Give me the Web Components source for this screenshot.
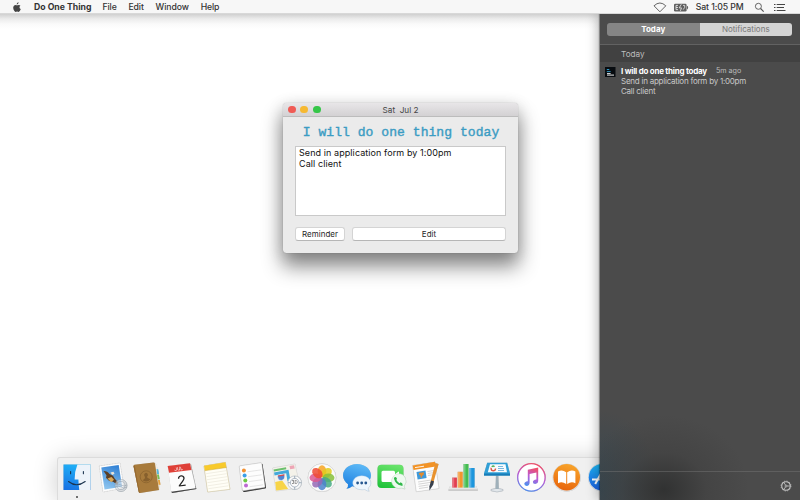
<!DOCTYPE html>
<html lang="en">
<head>
    <meta charset="UTF-8" />
    <meta name="viewport" content="width=device-width, initial-scale=1.0" />
    <title>Do One Thing</title>
    <style>
        body {
            margin: 0;
            width: 800px;
            height: 500px;
            overflow: hidden;
            background: #fff;
            font-family: Inter, "Liberation Sans", sans-serif;
            font-size: 9px;
        }
    </style>
</head>

<body>
<desk-top>
    <menu-bar slot="menu">
        <span>File</span><span>Edit</span><span>Window</span><span>Help</span>
    </menu-bar>
    <app-window slot="window" heading="Sat&nbsp; Jul 2">
        <todo-note>Send in application form by 1:00pm<br>Call client</todo-note>
    </app-window>
    <app-dock slot="dock"></app-dock>
    <notification-center slot="panel">
        <notice-item heading="I will do one thing today" when="5m ago">Send in application form by 1:00pm<br>Call client</notice-item>
    </notification-center>
</desk-top>
<script>
    function define(tag, html) {
        customElements.define(tag, class extends HTMLElement {
            constructor() {
                super();
                const t = document.createElement('template');
                t.innerHTML = typeof html === 'function' ? html(this) : html;
                this.attachShadow({ mode: 'open' }).appendChild(t.content.cloneNode(true));
            }
        });
    }

    define('desk-top', `
        <style>
            :host { display: grid; grid-template: 14px 486px / 600px 200px; width: 800px; height: 500px; }
            .menu { grid-column: 1 / 3; z-index: 3; }
            .space {
                position: relative;
                display: flex;
                flex-direction: column;
                justify-content: flex-end;
                min-width: 0;
                overflow: hidden;
                background: linear-gradient(#d0d0d0, #ececec 5px, #fafafa 10px, #fff 15px);
            }
            .window { position: absolute; left: 283px; top: 89px; }
            .panel { z-index: 2; }
        </style>
        <div class="menu"><slot name="menu"></slot></div>
        <div class="space">
            <div class="window"><slot name="window"></slot></div>
            <slot name="dock"></slot>
        </div>
        <div class="panel"><slot name="panel"></slot></div>
    `);

    define('menu-bar', `
        <style>
            :host {
                display: flex;
                align-items: center;
                box-sizing: border-box;
                height: 14px;
                padding: 1px 14px 0 12px;
                background: #f7f7f7;
                border-bottom: 1px solid #d8d8d8;
                color: #333;
                font-size: 8.7px;
                font-weight: 500;
                line-height: 12px;
                letter-spacing: -.1px;
                white-space: nowrap;
            }
            b { margin: 0 11px 0 12px; letter-spacing: 0; }
            nav { display: flex; gap: 11.8px; }
            .status { display: flex; align-items: center; margin-left: auto; }
            svg { display: block; }
        </style>
        <svg width="10" height="11" viewBox="0 0 10 11"><path fill="#444" d="M6.6.3C6.7 1.5 5.7 2.5 4.7 2.5 4.6 1.4 5.6.5 6.6.3ZM8.4 3.5C7 4.5 7.3 6.4 8.8 7.1 8.3 8.6 7.4 9.9 6.6 9.9 6 9.9 5.8 9.5 5.1 9.5 4.4 9.5 4.1 9.9 3.6 9.9 2.7 9.9 1.2 7.8 1.2 5.8 1.2 3.9 2.4 2.9 3.5 2.9 4.3 2.9 4.7 3.3 5.1 3.3 5.6 3.3 6 2.9 6.8 2.9 7.4 2.9 8.1 3.1 8.4 3.5Z"/></svg>
        <b>Do One Thing</b>
        <nav><slot></slot></nav>
        <div class="status">
            <svg width="14" height="12" viewBox="0 0 14 12"><path fill="none" stroke="#555" stroke-width=".9" stroke-linejoin="round" d="M1 4.8Q6.9-.8 12.8 4.8L6.9 10.8Z"/></svg>
            <svg style="margin-left:7.5px" width="15" height="9" viewBox="0 0 15 9"><rect y=".7" width="12.6" height="7.8" rx="1.3" fill="#606060"/><path fill="#606060" d="M13 3h.6q1.2 1.6 0 3.2H13z"/><path stroke="#eee" stroke-width=".8" fill="none" d="M4 2.4H2v4.2h2M2 4.5h2M7.3 1.3L5.2 4.9h2.3L6.4 7.9M9 2.4h1.7v2L9.2 6.6"/></svg>
            <span style="margin:0 10.5px 0 6.5px">Sat 1:05 PM</span>
            <svg width="11" height="11" viewBox="0 0 11 11"><g fill="none" stroke="#555" stroke-width=".9"><circle cx="4.4" cy="4.3" r="3"/><path d="M6.6 6.5L9.7 9.7" stroke-width="1.1"/></g></svg>
            <svg style="margin-left:9px" width="12" height="9" viewBox="0 0 12 9"><path stroke="#444" stroke-width="1" d="M0 1.5h1.5M2.7 1.5H11M0 4.5h1.5M2.7 4.5H10M0 7.5h1.5M2.7 7.5H11.5"/></svg>
        </div>
    `);

    define('push-button', `
        <style>
            :host {
                display: flex;
                align-items: center;
                justify-content: center;
                box-sizing: border-box;
                height: 14px;
                border: 1px solid #d4d4d4;
                border-bottom-color: #b6b6b6;
                border-radius: 3px;
                background: #fff;
                color: #262626;
                font-size: 8px;
                line-height: 10px;
            }
        </style>
        <slot></slot>
    `);

    define('todo-note', `
        <style>
            :host {
                display: block;
                box-sizing: border-box;
                height: 70px;
                padding: 0 3px;
                border: 1px solid #c9c9c9;
                background: #fff;
                color: #111;
                font-size: 9px;
                line-height: 11px;
                letter-spacing: .08px;
                white-space: nowrap;
            }
        </style>
        <slot></slot>
    `);

    define('app-window', el => `
        <style>
            :host {
                display: block;
                width: 235px;
                height: 150px;
                border-radius: 3.5px;
                background: #ebebeb;
                box-shadow: 0 0 1px rgba(0,0,0,.35), 0 13px 20px 1px rgba(0,0,0,.44), 0 3px 16px rgba(0,0,0,.15);
            }
            header {
                display: grid;
                grid-template-columns: 60px 1fr 60px;
                align-items: center;
                box-sizing: border-box;
                height: 14px;
                border-bottom: 1px solid #bcbcbc;
                border-radius: 3.5px 3.5px 0 0;
                background: linear-gradient(#e8e6e8, #d3d1d3);
                color: #454545;
                font-size: 8.2px;
                text-align: center;
                white-space: pre;
            }
            .lights { display: flex; gap: 4.6px; padding-left: 5px; }
            i { width: 7.8px; height: 7.8px; border-radius: 50%; }
            h1 {
                margin: 0 0 0 1px;
                height: 29px;
                font: 13px/32px "Liberation Mono", monospace;
                letter-spacing: .06px;
                color: #3b9cc3;
                -webkit-text-stroke: .4px #3b9cc3;
                text-align: center;
                white-space: nowrap;
            }
            main { padding: 0 12px; }
            .row { display: grid; grid-template-columns: 50px 1fr; gap: 7px; margin-top: 11px; }
        </style>
        <header><div class="lights"><i style="background:#f05b55"></i><i style="background:#f6b932"></i><i style="background:#35c648"></i></div><span>${el.getAttribute('heading')}</span></header>
        <main>
            <h1>I will do one thing today</h1>
            <slot></slot>
            <div class="row"><push-button>Reminder</push-button><push-button>Edit</push-button></div>
        </main>
    `);

    define('notice-item', el => `
        <style>
            :host { display: grid; grid-template-columns: 11px 1fr; gap: 5px; padding: 4px 5px; color: #c9c9c9; font-size: 8px; line-height: 10px; letter-spacing: -.24px; white-space: nowrap; }
            svg { display: block; margin-top: 1px; }
            header { display: flex; gap: 9px; }
            b { color: #fff; font-size: 8px; }
            time { font-size: 7.2px; letter-spacing: 0; color: #bcbcbc; }
        </style>
        <svg width="11" height="10" viewBox="0 0 11 10"><path fill="#080c10" d="M0 0h10.5v10H0z"/><path stroke="#3195c0" d="M1.8 2.5h2.5M1.8 4.6h3.8"/><path stroke="#e8e8e8" d="M2 6.6h3.6M2 8.1h7"/></svg>
        <div>
            <header><b>${el.getAttribute('heading')}</b><time>${el.getAttribute('when')}</time></header>
            <slot></slot>
        </div>
    `);

    define('notification-center', `
        <style>
            :host {
                display: flex;
                flex-direction: column;
                box-sizing: border-box;
                height: 486px;
                background:
                    radial-gradient(ellipse 85px 75px at 64px 476px, rgba(46,47,47,.9), rgba(60,60,60,.45) 50%, transparent),
                    radial-gradient(ellipse 60px 80px at 0 476px, rgba(52,70,80,.9), transparent),
                    #4b4b4b;
                box-shadow: -1px 0 1px rgba(0,0,0,.35), -2px 0 11px rgba(0,0,0,.3);
            }
            .tabs { display: grid; grid-template-columns: 1fr 1fr; margin: 9px 8px 8px 7px; height: 13px; border-radius: 3px; overflow: hidden; font-size: 8px; line-height: 13px; text-align: center; }
            .tabs b { background: #858585; color: #fff; }
            .tabs span { background: #d4d4d4; color: #777; }
            h2 { margin: 0; padding-left: 21px; height: 17px; border-top: 1px solid #626262; background: #414141; color: #bdbdbd; font-size: 8.2px; font-weight: normal; line-height: 18px; }
            footer { display: flex; justify-content: flex-end; align-items: center; box-sizing: border-box; height: 29px; margin-top: auto; padding-right: 8px; border-top: 1px solid rgba(120,120,120,.45); }
        </style>
        <div class="tabs"><b>Today</b><span>Notifications</span></div>
        <h2>Today</h2>
        <slot></slot>
        <footer>
            <svg width="12" height="12" viewBox="-6 -6 12 12"><g fill="none" stroke="#c4c4c4"><circle r="4.3" stroke-width="1.1"/><circle r="5" stroke-width=".7" stroke-dasharray="1.3 1.3"/><circle r="1" stroke-width=".8"/><path stroke-width=".8" d="M1 0H4.3M-.5-.9L-2.2-3.7M-.5.9L-2.2 3.7"/></g></svg>
        </footer>
    `);

    const petals = ['#f7a421', '#e0cb1c', '#86c03a', '#46aa83', '#4b83cc', '#9468b5', '#dc5890', '#ee4a33']
        .map((c, i) => `<ellipse cx="15" cy="9.2" rx="4.3" ry="6" fill="${c}" opacity=".85" transform="rotate(${i * 45} 15 15.7)"/>`).join('');

    // every drawing sits in a 30x30 box
    const ICONS = {
        finder: `<path fill="url(#fb)" d="M1.5 2.5h27V28h-27z"/><path fill="#edf3fa" d="M15.4 2.5H28.5V28H17.3Q16.6 24 16.4 17.5H12.6Q12.7 9 15.4 2.5Z"/>
            <path fill="none" stroke="#1c3550" stroke-width="1.1" stroke-linecap="round" d="M8.6 9.5v2.3M21.4 9.5v2.3M6.5 19.5Q14.5 26 23.2 19.5"/>`,
        mail: `<path fill="#fdfdfd" stroke="#cfcfcf" stroke-width=".5" stroke-dasharray="1 .6" d="M2.3 4L23 1l4 25L6 30z"/><path fill="url(#mb)" d="M4.3 5.5L21.7 3l3.4 21.8L7.5 27.5z"/>
            <path fill="#5b3f26" d="M6.5 9q4-.2 6 3l3.500 1.700 1.800 3 3 3.300-.3 2.500-5-3-3.500-.8-3-3 .5-2.500z"/><path fill="#d9a657" d="M10.500 16.500l4-1.500 2.500 2.800-2.700 2.400z"/><path fill="#e9e4d9" d="M13.5 10.500l3-.8 1 2-2.300 1.300z"/>
            <g fill="none" stroke="#8f9ba7" stroke-width=".5"><circle cx="24" cy="23.5" r="6" fill="#e5e9ed" fill-opacity=".55"/><circle cx="24" cy="23.5" r="4.1"/><path d="M18 25q3-2 6 0t6 0M18 23q3-2 6 0t6 0"/></g>`,
        contacts: `<path fill="#f1eee6" d="M22 1.5l2.8.8L28 27l-2 1.5z"/><path fill="#58b7dc" d="M24.5 7l1.700.2.8 4.8h-2z"/><path fill="#77bd53" d="M25 12.5l1.900.1.8 4.600h-2z"/><path fill="#e7a23b" d="M26 18l1.800.1.700 4.600h-2z"/>
            <path fill="#a87b3c" d="M2.5 2.8L21.5.4q1.200 0 1.500 1.200L27 28 8.200 31q-1.200.1-1.500-1.200L1.500 4.200Q1.300 3 2.500 2.800Z"/><path fill="#96692f" d="M1.500 4l1.300-.3L7.800 31q-.9 0-1.100-1.200z"/>
            <circle cx="14.200" cy="14.800" r="6" fill="none" stroke="#87602d" stroke-width=".7"/><path fill="#87602d" d="M14 10.800a2.200 2.200 0 0 1 1 4q-.1 1 3.500 2.500-3.300 3.800-7.800 1 2.900-2 2.200-3.200-2-3.300 1.100-4.300Z"/>`,
        calendar: `<path fill="#aaa" d="M5 7L24 2l5.400 25-24 4z"/><path fill="#444" d="M28.300 24l1.100 2.900L5 30.900 4 29z"/><path fill="#fcfcfc" d="M.7 4L23 1.300l5.700 25L4.200 29.800z"/><path fill="#df4038" d="M.7 4L23 1.300l1.500 6.600L2 10.800z"/>
            <g transform="rotate(-7 14 15)"><text x="12.700" y="8.200" font-size="4.600" fill="#fff" text-anchor="middle">JUL</text><text x="14.300" y="24.200" font-size="15" font-weight="400" fill="#222" text-anchor="middle">2</text></g>`,
        notes: `<path fill="#fffef6" stroke="#d6c99a" stroke-width=".5" d="M2 4L23.4.4 28 27.3 5.7 30z"/><path fill="#f8ca2c" d="M2 3.7L23.5.3l.9 5.1L2.8 8.6z"/><path fill="none" stroke="#c9a324" stroke-width=".5" d="M2.8 8.7l21.7-3.2"/>
            <path fill="none" stroke="#e3dfd0" stroke-width=".5" d="M4 11.7l20-3M4.5 14.7l20-3M5 17.7l20-3M5.4 20.7l20.2-3M6 23.8l20-3M6.4 26.7l20-2.9"/>`,
        reminders: `<path fill="#353535" d="M3.4 5.2L25.5 2 29 25.3q0 1.2-1 1.3L7.6 30q-1.5.2-1.7-1z"/><path fill="#fdfdfd" stroke="#bbb" stroke-width=".4" d="M3.3 3.8L23.5.8q1.1-.1 1.3.9L28 24.3q.1 1.1-1 1.3L6.5 28.7q-1 .1-1.2-.9L2.3 5Q2.1 4 3.3 3.8Z"/>
            <circle cx="6.9" cy="8.5" r="2" fill="#f39132"/><circle cx="7.6" cy="13.4" r="2" fill="#3a9fe8"/><circle cx="8.3" cy="18.5" r="2" fill="#6cca43"/><circle cx="9" cy="23.6" r="2" fill="#bd68d3"/><path stroke="#d5d5d5" stroke-width=".6" d="M10.5 9.8L24 7.9M11.2 14.7l13.5-1.9M12 19.6l13.5-1.9M12.6 24.7l13.5-1.9"/>`,
        maps: `<path fill="#f4f2ea" stroke="#ddd" stroke-width=".4" d="M.7 6L23 2l5 24L4 29z"/><path fill="#6cc06e" d="M1.5 7.6L14 5.3l.4 2L2 9.5z"/><path fill="#43a9db" d="M2 10.5l14.5-2.7 2 11-3 .5-1.3-8L2.6 13.4z"/><path fill="#f7d447" d="M3.2 20l7-1.4 6 8.300-12 1.700z"/><path fill="#eda5b5" d="M17.5 4l4.500-.8.7 3.300-4.500.8z"/>
            <path fill="#5285d1" stroke="#fff" stroke-width=".5" d="M5.5 13.4l6.800-1.200q1.500 5-2.600 6.200-4.200.5-4.200-5Z"/><path stroke="#df4b45" stroke-width="1.200" d="M5.900 14l6.500-1.100"/>
            <circle cx="22.700" cy="20.700" r="6.800" fill="#fafafa" stroke="#b0bac3" stroke-width=".7"/><circle cx="22.700" cy="20.700" r="4.300" fill="none" stroke="#7d8fa1" stroke-width=".6"/><path stroke="#7d8fa1" stroke-width=".7" d="M22.700 14v2.400M22.700 25v2.400M16 20.700h2.400M27 20.700h2.400"/><text x="22.700" y="22.300" font-size="4.300" text-anchor="middle" fill="#333">3D</text>`,
        photos: `<circle cx="15" cy="15.7" r="14" fill="#fbfbfb" stroke="#d2d2d2" stroke-width=".6"/>${petals}`,
        messages: `<path fill="url(#ms)" d="M15 2C22.8 2 29 7 29 13.3S22.8 25 15 25q-2.5 0-4.8-.7-2.3 2.3-5.8 2.5Q6.5 25 6 22.3C3 20.2 1 17 1 13.3 1 7 7.2 2 15 2Z"/>
            <path fill="#eef6fd" stroke="#b5cfe7" stroke-width=".4" d="M19.8 13.8c5 0 9 3.2 9 7.2 0 2.3-1.2 4-2.8 5.2q0 2 1.2 3-2.4 0-4.2-1.7c-7.4 1.2-12.2-2.6-12.2-6.5 0-4 4-7.2 9-7.2Z"/><g fill="#255790"><circle cx="15.6" cy="21" r="1.4"/><circle cx="19.7" cy="21" r="1.4"/><circle cx="23.8" cy="21" r="1.4"/></g>`,
        facetime: `<rect x=".5" y="2.7" width="26" height="23.3" rx="4" fill="url(#ft)"/><path fill="#fff" d="M6 8.8h10.5q1.500 0 1.500 1.500v2l3.200-2.600q.8-.4.8.4v7H18v1.200q-1.500 1.700-3 1.700H6q-1.500 0-1.500-1.500v-8.200Q4.500 8.800 6 8.800Z"/>
            <path fill="#eefaf0" stroke="#c0ddc4" stroke-width=".5" d="M21.5 11.8a7.3 7.3 0 0 1 5.500 12.300l1 3-3.500-1.200a7.300 7.300 0 1 1-3-14.100Z"/><path fill="none" stroke="#31b84b" stroke-width="1.900" stroke-linecap="round" d="M18.200 16.200q.2 5 6.600 6.700"/><path stroke="#31b84b" stroke-width="2.400" d="M17.400 16l2.100 1.100M23.300 22.700l1.200-1.800"/>`,
        pages: `<path fill="#fdfdfd" stroke="#ccc" stroke-width=".5" d="M.7 3.5L23 .2l4 26.3L4.3 29.7z"/><path fill="#f29326" d="M.7 3.5L23-.3l.7 4.7L1.5 8z"/><path stroke="#fff" stroke-width=".9" d="M3 5.6l9-1.4"/><path fill="#3f9adb" d="M4.5 10l9-1.4 1.1 7.5-9 1.4z"/><path fill="#e48b2d" d="M6.8 11l5-.8q.5 3-2 3.800l.4 1.400H8.400l.5-1.400q-2-.8-2.100-3z"/>
            <path stroke="#bbb" stroke-width=".6" d="M15.5 9.5l6-.9M15.8 11.5l5-.8M16 13.5l4.5-.7M6 20l13-2M6.3 22.2l12-1.8M6.6 24.4l10-1.5M7 26.5l9-1.3"/><path fill="#e8922e" d="M23.3 1.1l3.3 1L21 22l-2.8-.8z"/><path fill="#38414e" d="M19.1 18.4l2.9.8-.8 3.5-3.800 5.800v-4.300z"/>`,
        numbers: `<path fill="#e6e6e6" d="M3 24l-1.5 3.5h29.3L29.3 24z"/><path fill="#c9c9c9" d="M1.5 27.5h29.3v1.2H1.5z"/>
            <path fill="#e33e50" d="M5.2 15.600h4.700v10H5.200z"/><path fill="#f3952d" d="M10.700 9.800h5v15.800h-5z"/><path fill="#44bd51" d="M16.500 2h5v23.600h-5z"/><path fill="#1d96dd" d="M22.300 6h5.300v19.600h-5.300z"/><path fill="#fff" opacity=".25" d="M5.200 15.600h2v10h-2zM10.700 9.800h2v15.800h-2zM16.500 2h2v23.600h-2zM22.300 6h2v19.600h-2z"/>`,
        keynote: `<path fill="#e2e7eb" stroke="#94a0a9" stroke-width=".4" d="M9 27.500q6-2.500 12 0v1.200q-6 2.500-12 0z"/><path fill="#9fb0ba" d="M14 12h2.300l.5 15h-3.300z"/><path fill="#319fd6" d="M5.200.7h20L28 11.500v2H2v-2z"/><path fill="#177cb8" d="M2 11.500h26v2H2z"/><path fill="#f7fbfd" d="M8 2.200h15.500l1.500 8H5.800z"/><circle cx="11.300" cy="6.500" r="2.200" fill="none" stroke="#de5947" stroke-width="1.400" stroke-dasharray="7 7"/><path fill="none" stroke="#50af57" stroke-width="1.400" d="M9.700 4.700q1.600-1.200 2.800 0"/><path stroke="#5aa7d6" stroke-width=".8" d="M16 4.500h5M16 6.500h6M16 8.500h6"/>`,
        itunes: `<circle cx="14.400" cy="15.400" r="13.700" fill="#fff" stroke="url(#it)" stroke-width="1.300"/><path fill="url(#it)" d="M10.800 7.700L21.200 5.500V18.600Q21.200 21.700 18.200 22 15.900 22 15.900 20q0-2 3.500-2.500V10.500L12.600 12V20.400Q12.500 23.600 9.600 23.900 7.300 23.800 7.300 21.800q0-2.100 3.500-2.600Z"/>`,
        ibooks: `<circle cx="14.700" cy="15.700" r="14" fill="#dedede"/><circle cx="14.700" cy="15.200" r="13.300" fill="url(#ib)"/><path fill="#fff" d="M14.200 10.200Q10 7 6 9.500v11.700Q10 18.900 14.200 22ZM15.200 10.200Q19.400 7 23.400 9.500v11.700Q19.400 18.900 15.200 22Z"/>`,
        appstore: `<circle cx="15" cy="15.400" r="14" fill="#d9e2e9"/><circle cx="15" cy="15.200" r="13.200" fill="url(#as)"/><path fill="none" stroke="#fff" stroke-width="2" d="M16.500 7L8.200 22M13.500 7l8.500 15M5 17.500h20"/>`
    };

    const GRADIENTS = [
        ['fb', '#20b4f8', '#1874e4'], ['mb', '#3383d6', '#8fc5ee'], ['ms', '#5cb9f7', '#1d7fe0'], ['ft', '#68e36a', '#21c33b'],
        ['it', '#f0506b', '#4f8fee', '#b75bd8'], ['ib', '#f8a42b', '#e8640b'], ['as', '#1dc0f6', '#1c62e4']
    ].map(([id, a, b, mid]) => `<linearGradient id="${id}" x1=".6" y1="0" x2=".3" y2="1"><stop stop-color="${a}"/>${mid ? `<stop offset=".5" stop-color="${mid}"/>` : ''}<stop offset="1" stop-color="${b}"/></linearGradient>`);

    define('dock-icon', el => {
        const art = ICONS[el.getAttribute('name')];
        const defs = GRADIENTS.filter(g => art.includes(`url(#${g.match(/id="(\w+)"/)[1]})`)).join('');
        return `
        <style>
            :host { display: block; width: 30px; height: 38px; }
            svg { display: block; overflow: visible; font-family: Inter, sans-serif; filter: drop-shadow(0 .5px .5px rgba(0,0,0,.2)); }
            i { display: block; width: 2.4px; height: 2.4px; margin: 4px auto 0; border-radius: 50%; background: #444; }
        </style>
        <svg width="30" height="30" viewBox="0 0 30 30"><defs>${defs}</defs>${art}</svg>
        ${el.hasAttribute('running') ? '<i></i>' : ''}`;
    });

    define('app-dock', `
        <style>
            :host {
                display: flex;
                gap: 5px;
                box-sizing: border-box;
                width: 700px;
                height: 43px;
                margin-left: 57px;
                padding: 4px 4px 0;
                border: 1px solid #dcdcdc;
                border-bottom: 0;
                border-radius: 3px 3px 0 0;
                background: #f0f0f0;
                box-shadow: 0 2px 24px rgba(0,0,0,.2);
            }
            dock-icon { flex: none; }
        </style>
        ${Object.keys(ICONS).map((n, i) => `<dock-icon name="${n}"${i ? '' : ' running'}></dock-icon>`).join('')}
    `);
</script>
</body>
</html>
